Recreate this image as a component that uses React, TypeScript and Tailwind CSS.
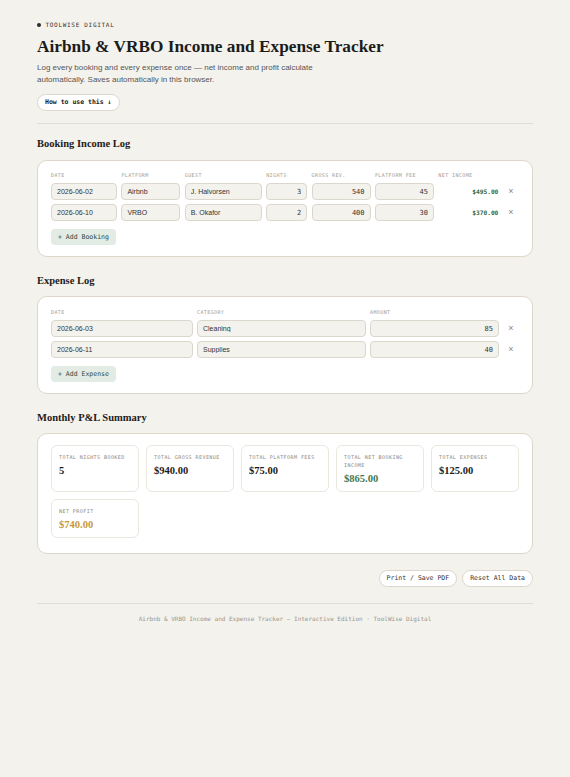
import React from "react";

const mono = { fontFamily: '"DejaVu Sans Mono", "Liberation Mono", monospace' };
const serif = { fontFamily: '"Liberation Serif", "Times New Roman", serif' };
const sans = { fontFamily: '"Liberation Sans", Arial, sans-serif' };

const bookings = [
  { date: "2026-06-02", platform: "Airbnb", guest: "J. Halvorsen", nights: "3", gross: "540", fee: "45", net: "$495.00" },
  { date: "2026-06-10", platform: "VRBO", guest: "B. Okafor", nights: "2", gross: "400", fee: "30", net: "$370.00" },
];

const expenses = [
  { date: "2026-06-03", category: "Cleaning", amount: "85" },
  { date: "2026-06-11", category: "Supplies", amount: "40" },
];

const stats = [
  { label: "Total Nights Booked", value: "5", tone: "text-[#1c1c1c]" },
  { label: "Total Gross Revenue", value: "$940.00", tone: "text-[#1c1c1c]" },
  { label: "Total Platform Fees", value: "$75.00", tone: "text-[#1c1c1c]" },
  { label: "Total Net Booking Income", value: "$865.00", tone: "text-[#3b7a55]" },
  { label: "Total Expenses", value: "$125.00", tone: "text-[#1c1c1c]" },
  { label: "Net Profit", value: "$740.00", tone: "text-[#c49a3c]" },
];

function TextInput({ value }: { value: string }) {
  return (
    <input
      readOnly
      defaultValue={value}
      style={sans}
      className="block h-[17px] w-full min-w-0 rounded-[4px] border border-[#dcd7cc] bg-[#f4f2ed] px-[5px] text-[7px] text-[#333] outline-none"
    />
  );
}

function NumInput({ value }: { value: string }) {
  return (
    <input
      readOnly
      defaultValue={value}
      style={mono}
      className="block h-[17px] w-full min-w-0 rounded-[4px] border border-[#dcd7cc] bg-[#f4f2ed] px-[5px] text-right text-[7px] text-[#333] outline-none"
    />
  );
}

function ColHead({ children }: { children?: React.ReactNode }) {
  return (
    <div style={mono} className="h-[7px] text-[5px] uppercase leading-[7px] tracking-[0.4px] text-[#a09c94]">
      {children}
    </div>
  );
}

function Remove() {
  return <span className="flex items-center justify-center text-[9px] leading-none text-[#8a8680]" style={sans}>×</span>;
}

function AddButton({ label }: { label: string }) {
  return (
    <button
      style={mono}
      className="mt-[8px] block h-[16px] rounded-[4px] bg-[#e3ebe5] px-[7px] text-[6.5px] leading-[16px] text-[#2e4a3b]"
    >
      + {label}
    </button>
  );
}

function SectionTitle({ children }: { children: React.ReactNode }) {
  return (
    <h2 style={serif} className="text-[10.5px] font-bold leading-[14px] text-[#1c1c1c]">
      {children}
    </h2>
  );
}

export default function App() {
  const bookingCols = "grid grid-cols-[66px_59px_77px_41px_59px_59px_60px_1fr] gap-x-[4.4px]";
  const expenseCols = "grid grid-cols-[142px_169px_129px_1fr] gap-x-[4px]";

  return (
    <div className="min-h-[777px] w-full bg-[#f4f2ed] px-[37px] pt-[20px] pb-[40px]">
      {/* Header */}
      <div style={mono} className="flex items-center gap-[5px] text-[6px] uppercase leading-[10px] tracking-[0.7px] text-[#333]">
        <span className="h-[3.5px] w-[3.5px] rounded-full bg-[#2b2b2b]" />
        ToolWise Digital
      </div>
      <h1 style={serif} className="mt-[6px] text-[17.3px] font-bold leading-[22px] text-[#1c1c1c]">
        Airbnb &amp; VRBO Income and Expense Tracker
      </h1>
      <p style={sans} className="mt-[4px] max-w-[300px] text-[8px] leading-[12px] text-[#555]">
        Log every booking and every expense once — net income and profit calculate automatically. Saves automatically in this browser.
      </p>
      <button
        style={mono}
        className="mt-[8px] block h-[17px] rounded-full border border-[#dcd7cc] bg-white px-[7px] text-[6.5px] font-bold leading-[15px] text-[#222]"
      >
        How to use this ↓
      </button>
      <div className="mt-[12px] h-px bg-[#e2ded5]" />

      {/* Booking Income Log */}
      <div className="mt-[13px]">
        <SectionTitle>Booking Income Log</SectionTitle>
      </div>
      <div className="mt-[9px] rounded-[10px] border border-[#ddd7ca] bg-white px-[13px] pt-[11px] pb-[11px]">
        <div className={bookingCols}>
          <ColHead>Date</ColHead>
          <ColHead>Platform</ColHead>
          <ColHead>Guest</ColHead>
          <ColHead>Nights</ColHead>
          <ColHead>Gross Rev.</ColHead>
          <ColHead>Platform Fee</ColHead>
          <ColHead>Net Income</ColHead>
          <ColHead />
        </div>
        <div className="mt-[4px] flex flex-col gap-[4px]">
          {bookings.map((b) => (
            <div key={b.date} className={bookingCols}>
              <TextInput value={b.date} />
              <TextInput value={b.platform} />
              <TextInput value={b.guest} />
              <NumInput value={b.nights} />
              <NumInput value={b.gross} />
              <NumInput value={b.fee} />
              <div style={mono} className="flex items-center justify-end text-[6.2px] font-bold text-[#2f6b4a]">
                {b.net}
              </div>
              <Remove />
            </div>
          ))}
        </div>
        <AddButton label="Add Booking" />
      </div>

      {/* Expense Log */}
      <div className="mt-[17px]">
        <SectionTitle>Expense Log</SectionTitle>
      </div>
      <div className="mt-[8px] rounded-[10px] border border-[#ddd7ca] bg-white px-[13px] pt-[12px] pb-[11px]">
        <div className={expenseCols}>
          <ColHead>Date</ColHead>
          <ColHead>Category</ColHead>
          <ColHead>Amount</ColHead>
          <ColHead />
        </div>
        <div className="mt-[4px] flex flex-col gap-[4px]">
          {expenses.map((e) => (
            <div key={e.date} className={expenseCols}>
              <TextInput value={e.date} />
              <TextInput value={e.category} />
              <NumInput value={e.amount} />
              <Remove />
            </div>
          ))}
        </div>
        <AddButton label="Add Expense" />
      </div>

      {/* Summary */}
      <div className="mt-[17px]">
        <SectionTitle>Monthly P&amp;L Summary</SectionTitle>
      </div>
      <div className="mt-[8px] rounded-[10px] border border-[#ddd7ca] bg-white px-[13px] pt-[11px] pb-[15px]">
        <div className="grid grid-cols-5 gap-[7px]">
          {stats.map((s) => (
            <div key={s.label} className="rounded-[6px] border border-[#ebe7de] bg-white px-[7px] pt-[7px] pb-[6px]">
              <div style={mono} className="text-[5px] uppercase leading-[8px] tracking-[0.45px] text-[#8d8982]">
                {s.label}
              </div>
              <div style={serif} className={`mt-[3px] text-[10.5px] font-bold leading-[13px] ${s.tone}`}>
                {s.value}
              </div>
            </div>
          ))}
        </div>
      </div>

      {/* Actions */}
      <div className="mt-[16px] flex justify-end gap-[5px]">
        <button style={mono} className="block h-[17px] rounded-full border border-[#dcd7cc] bg-white px-[7px] text-[6.5px] leading-[15px] text-[#333]">
          Print / Save PDF
        </button>
        <button style={mono} className="block h-[17px] rounded-full border border-[#dcd7cc] bg-white px-[7px] text-[6.5px] leading-[15px] text-[#333]">
          Reset All Data
        </button>
      </div>
      <div className="mt-[16px] h-px bg-[#e2ded5]" />
      <p style={mono} className="mt-[11px] text-center text-[6px] leading-[8px] text-[#9a968e]">
        Airbnb &amp; VRBO Income and Expense Tracker — Interactive Edition · ToolWise Digital
      </p>
    </div>
  );
}
